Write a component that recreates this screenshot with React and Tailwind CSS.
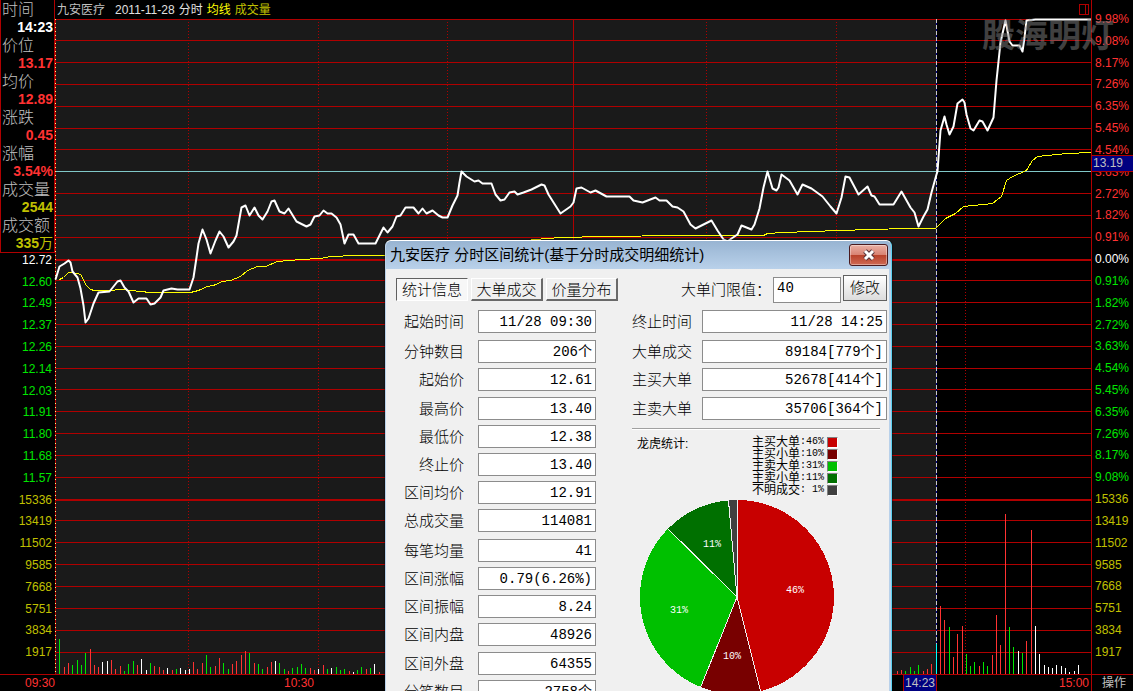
import React, { useState } from 'react';

const GRID_Y = [
  19, 40, 62, 84, 106, 128, 149, 193, 215, 237, 280, 302, 324, 346, 368, 389,
  411, 433, 455, 477, 520, 542, 564, 586, 608, 630, 652,
];
const THICK_Y = [259, 499];
const DOTTED_X = [188, 318, 447, 706, 836, 965];

const PRICE_LINE =
  '55,279 59,266 64,263 68,260 70,262 72,271 77,277 80,288 83,305 85,322 88,318 93,303 98,292 109,291 117,281 120,280 124,287 128,291 133,302 138,298 146,298 150,304 154,303 160,297 163,290 171,288 177,289 189,289 193,277 196,257 198,243 202,229 206,239 210,253 215,240 219,231 223,236 228,247 233,241 236,235 239,218 241,207 245,205 249,215 254,207 258,215 262,219 267,211 271,201 274,200 279,211 284,213 288,208 296,221 306,226 310,224 314,216 319,215 323,210 327,213 331,213 336,217 340,224 344,243 348,234 353,234 358,243 375,243 383,227 387,232 392,226 396,216 400,215 405,207 413,207 418,213 422,208 426,213 432,210 438,215 442,217 447,217 452,205 457,195 459,182 461,171 466,176 474,181 478,180 482,183 491,183 495,194 500,200 504,199 509,192 514,191 517,194 523,192 531,189 541,184 544,185 548,194 560,213 570,206 573,202 576,188 581,187 590,192 595,190 606,196 629,196 633,200 642,202 655,197 659,200 666,200 672,206 677,207 683,211 690,224 695,228 703,224 711,220 717,230 723,239 727,241 731,238 737,234 741,225 751,229 754,224 759,208 763,187 767,171 772,188 776,190 778,187 781,174 789,180 797,194 802,184 811,188 822,196 830,206 836,213 841,197 845,176 849,177 858,194 867,186 871,195 874,196 879,204 893,204 901,191 910,207 914,212 918,226 923,216 927,209 931,192 936,174 937,171 938,157 940,130 944,116 946,124 949,134 953,126 957,103 962,99 964,102 966,114 970,128 973,130 979,120 982,121 987,130 993,117 996,80 1000,42 1002,33 1005,20 1009,41 1012,45 1019,45 1022,51 1024,37 1026,20 1035,19 1091,19';

const AVG_LINE =
  '59,279 63,277 68,272 78,273 81,275 85,284 90,289 94,290 110,290 120,289 130,290 150,292 190,292 198,290 207,286 213,285 222,281 230,280 240,276 247,270 257,266 265,266 277,261 300,259 320,258 330,256 355,255 383,255 545,238 563,237 601,236 683,235 763,235 767,233 783,232 810,231 870,229 907,228 935,228 937,226 945,218 955,213 963,206 992,203 997,199 1001,196 1006,180 1012,176 1026,170 1032,160 1037,156 1067,153 1091,152';

const BAR_COLORS = { r: '#ff3232', g: '#00e600', w: '#ffffff', c: '#00ffff' };

// [x, height, color]
const VOLUME_BARS = [
  [59, 35, 'g'], [64, 7, 'r'], [68, 11, 'r'], [72, 9, 'g'], [77, 14, 'g'], [81, 9, 'g'], [85, 21, 'g'],
  [90, 25, 'r'], [94, 9, 'r'], [98, 7, 'r'], [102, 12, 'w'], [107, 13, 'w'], [111, 14, 'r'], [115, 5, 'r'],
  [120, 8, 'r'], [124, 3, 'g'], [128, 10, 'g'], [133, 13, 'g'], [137, 9, 'r'], [141, 15, 'w'], [146, 4, 'w'],
  [150, 11, 'g'], [154, 8, 'r'], [159, 7, 'r'], [163, 4, 'r'], [167, 6, 'w'], [172, 4, 'r'], [176, 5, 'g'],
  [180, 6, 'w'], [185, 4, 'w'], [189, 5, 'w'], [193, 12, 'r'], [197, 5, 'r'], [202, 11, 'r'], [206, 19, 'g'],
  [210, 7, 'g'], [215, 8, 'r'], [219, 16, 'r'], [223, 11, 'g'], [228, 5, 'g'], [232, 10, 'r'], [236, 13, 'r'],
  [241, 19, 'r'], [245, 23, 'r'], [249, 21, 'g'], [254, 11, 'r'], [258, 10, 'g'], [262, 5, 'g'], [267, 7, 'r'],
  [271, 12, 'r'], [275, 13, 'w'], [279, 11, 'g'], [284, 5, 'g'], [288, 3, 'r'], [292, 6, 'g'], [297, 7, 'g'],
  [301, 10, 'g'], [305, 6, 'g'], [310, 6, 'r'], [314, 4, 'r'], [318, 5, 'w'], [323, 9, 'r'], [327, 5, 'g'],
  [331, 6, 'w'], [336, 7, 'g'], [340, 4, 'g'], [344, 5, 'g'], [349, 3, 'r'], [353, 2, 'w'], [357, 4, 'g'],
  [361, 7, 'g'], [366, 5, 'r'], [370, 6, 'g'], [374, 10, 'w'], [379, 2, 'r'],
  [897, 3, 'r'], [901, 4, 'r'], [905, 3, 'g'], [910, 7, 'g'], [914, 3, 'g'], [918, 9, 'g'], [923, 3, 'r'],
  [927, 5, 'r'], [931, 10, 'r'], [936, 30, 'c'], [940, 68, 'r'], [944, 54, 'r'], [949, 47, 'g'], [953, 17, 'r'],
  [957, 40, 'r'], [962, 48, 'r'], [966, 20, 'g'], [970, 8, 'g'], [974, 12, 'g'], [979, 8, 'r'], [983, 12, 'g'],
  [987, 8, 'g'], [992, 19, 'r'], [996, 59, 'r'], [1000, 29, 'r'], [1005, 160, 'r'], [1009, 47, 'g'],
  [1013, 27, 'g'], [1018, 23, 'w'], [1022, 21, 'g'], [1026, 33, 'r'], [1031, 144, 'r'], [1035, 48, 'w'],
  [1039, 20, 'w'], [1044, 9, 'w'], [1048, 7, 'w'], [1052, 6, 'w'], [1056, 9, 'w'], [1061, 8, 'w'],
  [1065, 6, 'w'], [1069, 2, 'w'], [1074, 3, 'w'], [1078, 9, 'w'], [1091, 13, 'w'],
];

const QUOTE = [
  { label: '时间', value: '14:23', color: 'text-white' },
  { label: '价位', value: '13.17', color: 'text-[#ff3232]' },
  { label: '均价', value: '12.89', color: 'text-[#ff3232]' },
  { label: '涨跌', value: '0.45', color: 'text-[#ff3232]' },
  { label: '涨幅', value: '3.54%', color: 'text-[#ff3232]' },
  { label: '成交量', value: '2544', color: 'text-[#c0c000]' },
  { label: '成交额', value: '335', unit: '万', color: 'text-[#c0c000]' },
];

const VOLUME_LABELS = ['15336', '13419', '11502', '9585', '7668', '5751', '3834', '1917'];
const PRICES_DOWN = ['12.60', '12.49', '12.37', '12.26', '12.14', '12.03', '11.91', '11.80', '11.68', '11.57'];
const PCT_UP = ['9.98%', '9.08%', '8.17%', '7.26%', '6.35%', '5.45%', '4.54%', '3.63%', '2.72%', '1.82%', '0.91%'];
const PCT_DOWN = ['0.91%', '1.82%', '2.72%', '3.63%', '4.54%', '5.45%', '6.35%', '7.26%', '8.17%', '9.08%'];

const LEFT_FIELDS = [
  { id: 'start', label: '起始时间', value: '11/28 09:30', h: 'h-[30px]' },
  { id: 'minutes', label: '分钟数目', value: '206个', h: 'h-[28px]' },
  { id: 'open', label: '起始价', value: '12.61', h: 'h-[29px]' },
  { id: 'high', label: '最高价', value: '13.40', h: 'h-[28px]' },
  { id: 'low', label: '最低价', value: '12.38', h: 'h-[28px]' },
  { id: 'close', label: '终止价', value: '13.40', h: 'h-[28px]' },
  { id: 'avg', label: '区间均价', value: '12.91', h: 'h-[28px]' },
  { id: 'volume', label: '总成交量', value: '114081', h: 'h-[30px]' },
  { id: 'per', label: '每笔均量', value: '41', h: 'h-[28px]' },
  { id: 'change', label: '区间涨幅', value: '0.79(6.26%)', h: 'h-[28px]' },
  { id: 'swing', label: '区间振幅', value: '8.24', h: 'h-[28px]' },
  { id: 'inner', label: '区间内盘', value: '48926', h: 'h-[29px]' },
  { id: 'outer', label: '区间外盘', value: '64355', h: 'h-[28px]' },
  { id: 'trades', label: '分笔数目', value: '2758个', h: 'h-[28px]' },
];

const RIGHT_FIELDS = [
  { id: 'end', label: '终止时间', value: '11/28 14:25', h: 'h-[30px]' },
  { id: 'big', label: '大单成交', value: '89184[779个]', h: 'h-[28px]' },
  { id: 'bigbuy', label: '主买大单', value: '52678[414个]', h: 'h-[29px]' },
  { id: 'bigsell', label: '主卖大单', value: '35706[364个]', h: 'h-[28px]' },
];

const LEGEND = [
  { label: '主买大单', pct: '46%', bg: 'bg-[#c80000]' },
  { label: '主买小单', pct: '10%', bg: 'bg-[#780000]' },
  { label: '主卖大单', pct: '31%', bg: 'bg-[#00c000]' },
  { label: '主卖小单', pct: '11%', bg: 'bg-[#007000]' },
  { label: '不明成交', pct: '\u00a01%', bg: 'bg-[#404040]' },
];

const SLICES = [
  { from: 0, to: 0.461, fill: '#c80000' },
  { from: 0.461, to: 0.561, fill: '#780000' },
  { from: 0.561, to: 0.874, fill: '#00c000' },
  { from: 0.874, to: 0.986, fill: '#007000' },
  { from: 0.986, to: 1, fill: '#404040' },
];

const TABS = ['统计信息', '大单成交', '价量分布'];

const QuotePanel = () => (
  <dl className="border border-t-0 border-[#b00000] bg-black">
    {QUOTE.map((q) => (
      <React.Fragment key={q.label}>
        <dt className="h-[18px] whitespace-nowrap pl-px text-base font-light leading-5 text-[#c0c0c0]">{q.label}</dt>
        <dd className={`h-[18px] whitespace-nowrap pr-px text-right text-sm font-bold leading-[18px] ${q.color}`}>
          {q.value}
          {q.unit && <span className="font-normal">{q.unit}</span>}
        </dd>
      </React.Fragment>
    ))}
  </dl>
);

const AxisLabels = ({ items, className }) => (
  <div className={`flex flex-1 flex-col text-xs ${className}`}>
    {items.map((item, i) => (
      <div key={i} className={`flex min-h-0 flex-1 items-center ${item.color}`}>
        <span className="leading-none">{item.text}</span>
      </div>
    ))}
  </div>
);

const leftAxis = [
  { text: '12.72', color: 'text-white' },
  ...PRICES_DOWN.map((text) => ({ text, color: 'text-[#00e600]' })),
  ...VOLUME_LABELS.map((text) => ({ text, color: 'text-[#c0c000]' })),
];

const rightAxis = [
  ...PCT_UP.map((text) => ({ text, color: 'text-[#ff3232]' })),
  { text: '0.00%', color: 'text-white' },
  ...PCT_DOWN.map((text) => ({ text, color: 'text-[#00e600]' })),
  ...VOLUME_LABELS.map((text) => ({ text, color: 'text-[#c0c000]' })),
];

const Chart = () => (
  <svg
    className="relative block min-h-0 w-full flex-1 overflow-visible"
    viewBox="55 19 1036 655"
    preserveAspectRatio="none"
    shapeRendering="crispEdges"
  >
    {/* selected range */}
    <rect x="56" y="19" width="880" height="655" fill="#1a1a1a" />
    {GRID_Y.map((y) => (
      <rect key={y} x="56" y={y} width="1035" height="1" fill="#b00000" />
    ))}
    {THICK_Y.map((y) => (
      <rect key={y} x="56" y={y} width="1035" height="2" fill="#b00000" />
    ))}
    {DOTTED_X.map((x) => (
      <line key={x} x1={x + 0.5} x2={x + 0.5} y1="22" y2="674" stroke="#b00000" strokeDasharray="1 2" />
    ))}
    <rect x="573" y="19" width="1" height="655" fill="#b00000" />
    <rect x="55" y="19" width="1" height="655" fill="#b00000" />
    <line x1="55.5" x2="55.5" y1="19" y2="674" stroke="#ffff80" strokeDasharray="1 3" />
    {VOLUME_BARS.map(([x, h, c]) => (
      <rect key={x} x={x} y={674 - h} width="1" height={h} fill={BAR_COLORS[c]} />
    ))}
    {/* crosshair */}
    <rect x="56" y="171" width="1035" height="1" fill="#80c8c8" />
    <rect x="936" y="19" width="1" height="625" fill="#000080" />
    <line x1="936.5" x2="936.5" y1="19" y2="644" stroke="#c8c8c8" strokeDasharray="4 2" />
    <g fill="none" transform="translate(0.5 0.5)">
      <polyline points={AVG_LINE} stroke="#ffff00" />
      <polyline
        points={PRICE_LINE}
        stroke="#ffffff"
        strokeWidth="2"
        strokeLinejoin="round"
        shapeRendering="geometricPrecision"
      />
    </g>
  </svg>
);

const point = (t, r) => {
  const a = t * Math.PI * 2;
  return `${98 + Math.sin(a) * r} ${98 - Math.cos(a) * r}`;
};

const PieChart = () => (
  <svg className="ml-[7px] block h-[196px] w-[196px]" viewBox="0 0 196 196">
    <g shapeRendering="crispEdges">
      {SLICES.map((s) => (
        <path
          key={s.fill}
          d={`M98 98 L${point(s.from, 97)} A97 97 0 0 1 ${point(s.to, 97)} Z`}
          fill={s.fill}
        />
      ))}
      {SLICES.map((s) => (
        <path key={s.fill} d={`M98 98 L${point(s.from, 97)}`} stroke="#f0f0f0" />
      ))}
    </g>
    <g fill="#fff" fontSize="10" textAnchor="middle" fontFamily='"Liberation Mono", monospace'>
      <text x="156" y="94">46%</text>
      <text x="40" y="114">31%</text>
      <text x="73" y="48">11%</text>
      <text x="93" y="160">10%</text>
    </g>
  </svg>
);

const Field = ({ field, labelClass, inputClass }) => (
  <div className={`flex ${field.h} items-start`}>
    <label htmlFor={field.id} className={`whitespace-nowrap text-[15px] font-light leading-[23px] ${labelClass}`}>
      {field.label}
    </label>
    <input
      id={field.id}
      readOnly
      defaultValue={field.value}
      className={`h-[23px] border border-[#8c8c8c] bg-white px-[3px] text-right font-['Liberation_Mono','Noto_Sans_CJK_SC',monospace] text-sm leading-[17px] outline-none ${
        field.value.includes('个') ? 'pb-[3px]' : ''
      } ${inputClass}`}
    />
  </div>
);

const StatsDialog = () => {
  const [tab, setTab] = useState(0);

  return (
    <div
      role="dialog"
      aria-labelledby="dialog-title"
      className="absolute left-[385px] top-[240px] w-[507px] rounded-t-md border-x border-t border-l-[#b9d1ea] border-r-[#5bd0f0] border-t-white bg-[#f0f0f0] text-black shadow-[0_0_2px_#000]"
    >
      <div className="flex h-7 items-center justify-between rounded-t-[5px] bg-linear-to-b from-[#98b4d2] to-[#b9d1ea] pl-1 pr-[3px]">
        <h2 id="dialog-title" className="whitespace-nowrap text-[15px] leading-7">
          九安医疗 分时区间统计(基于分时成交明细统计)
        </h2>
        <button
          aria-label="关闭"
          className="flex h-[22px] w-[39px] items-center justify-center rounded-[3px] border border-[#4a1a1e] bg-[linear-gradient(#eab0a4,#d98474_48%,#b8412a_50%,#cf6a54)] shadow-[inset_0_0_0_1px_#ffffff60]"
        >
          <svg width="14" height="12" viewBox="0 0 14 12">
            <path d="M3 2 L11 10 M11 2 L3 10" stroke="#53333a" strokeWidth="5" />
            <path d="M3 2 L11 10 M11 2 L3 10" stroke="#fff" strokeWidth="3" />
          </svg>
        </button>
      </div>

      <div className="flex gap-[14px] border-r-2 border-[#b9d1ea] pl-[10px] pr-1">
        <div className="w-[222px] shrink-0">
          <div className="flex h-[41px] gap-[3px] pt-[9px]">
            {TABS.map((name, i) => (
              <button
                key={name}
                onClick={() => setTab(i)}
                className={`h-[23px] w-[72px] whitespace-nowrap border text-[15px] font-light leading-[21px] ${
                  tab === i
                    ? 'border-b-white border-l-[#606060] border-r-white border-t-[#606060] bg-[#f7f7f7]'
                    : 'border-b-2 border-r-2 border-b-[#696969] border-l-white border-r-[#696969] border-t-white bg-[#f0f0f0]'
                }`}
              >
                {name}
              </button>
            ))}
          </div>
          {LEFT_FIELDS.map((f) => (
            <Field key={f.id} field={f} labelClass="w-[68px] text-right" inputClass="ml-[14px] w-[118px]" />
          ))}
        </div>

        <div className="flex-1">
          <div className="flex h-[41px] items-start justify-end gap-[2px] pt-[6px]">
            <label htmlFor="limit" className="whitespace-nowrap text-[15px] font-light leading-[29px]">
              大单门限值：
            </label>
            <input
              id="limit"
              defaultValue="40"
              className="mt-[2px] h-[26px] w-[68px] border border-[#8c8c8c] bg-white px-[3px] pb-1 font-['Liberation_Mono',monospace] text-sm outline-none"
            />
            <button className="h-[26px] w-[44px] whitespace-nowrap border border-[#606060] bg-linear-to-b from-white to-[#dcdcdc] text-[15px] font-light leading-[22px]">
              修改
            </button>
          </div>
          {RIGHT_FIELDS.map((f) => (
            <Field key={f.id} field={f} labelClass="w-[70px]" inputClass="min-w-0 flex-1" />
          ))}
          <hr className="mr-[7px] mt-[3px] h-[2px] border-b border-t border-b-white border-t-[#a0a0a0]" />
          <div className="flex justify-between pl-[5px] pr-[49px] pt-[6px] text-xs">
            <h3 className="leading-4">龙虎统计:</h3>
            <ul>
              {LEGEND.map((l) => (
                <li key={l.label} className="flex h-3 items-center whitespace-nowrap leading-3">
                  <span>{l.label}</span>
                  <span className="font-['Liberation_Mono',monospace] text-[10px]">:{l.pct}</span>
                  <span
                    className={`ml-[3px] h-[11px] w-[11px] border border-b-white border-l-[#808080] border-r-white border-t-[#808080] ${l.bg}`}
                  />
                </li>
              ))}
            </ul>
          </div>
          <div className="pt-[3px]">
            <PieChart />
          </div>
        </div>
      </div>
    </div>
  );
};

export default function App() {
  return (
    <div className="relative flex h-screen flex-col overflow-hidden bg-black font-['Liberation_Sans','Noto_Sans_CJK_SC',sans-serif]">
      <main className="flex min-h-0 flex-1">
        <aside className="flex w-[55px] shrink-0 flex-col pb-[11px]">
          <QuotePanel />
          <AxisLabels items={leftAxis} className="-mt-1 items-end pr-[3px]" />
        </aside>

        <section className="flex min-w-0 flex-1 flex-col">
          <header className="flex h-[19px] shrink-0 items-center whitespace-nowrap pl-[2px] pr-[2px] text-xs leading-none">
            <h1 className="text-[#c0c0c0]">九安医疗</h1>
            <span className="ml-[10px] text-[#e0e0e0]">2011-11-28</span>
            <span className="ml-1 text-[#e0e0e0]">分时</span>
            <span className="ml-1 text-[#ffff00]">均线</span>
            <span className="ml-1 text-[#c0c000]">成交量</span>
            <svg className="ml-auto" width="10" height="11" shapeRendering="crispEdges">
              <path d="M0.5 0.5 H9.5 V10.5 H0.5 Z M6.5 0 V11" fill="none" stroke="#b00000" />
            </svg>
          </header>
          <Chart />
        </section>

        <aside className="relative flex w-[42px] shrink-0 flex-col border-l border-[#b00000] pb-[11px] pt-2">
          <AxisLabels items={rightAxis} className="pl-[3px]" />
          <div className="absolute inset-x-0 top-[155px] h-[17px] border-y border-[#b00000] bg-[#000080] pl-px text-xs leading-[15px] text-[#c0c0c0]">
            13.19
          </div>
        </aside>
      </main>

      <footer className="flex h-[17px] shrink-0 border-t border-[#b00000] text-xs leading-4 text-[#ff3232]">
        <div className="w-[55px] text-right">09:30</div>
        <div className="grid flex-1 grid-cols-[259fr_589fr_34fr_154fr]">
          <span className="text-right">10:30</span>
          <span />
          <span className="border-x border-[#b00000] bg-[#000080] pl-px text-[#c0c0c0]">14:23</span>
          <span className="pr-[2px] text-right">15:00</span>
        </div>
        <button className="w-[42px] border-l border-[#b00000] pl-[3px] leading-4 text-[#c0c0c0]">操作</button>
      </footer>

      <div className="pointer-events-none absolute right-[19px] top-[16px] text-[33px] font-bold leading-10 text-[#808080]/50">
        股海明灯
      </div>

      <StatsDialog />
    </div>
  );
}
